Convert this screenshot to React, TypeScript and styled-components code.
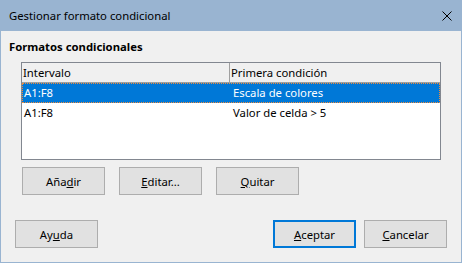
import React from "react";
import styled, { createGlobalStyle, css } from "styled-components";

const GlobalStyle = createGlobalStyle`
  html, body {
    margin: 0;
    padding: 0;
    background: #f0f0f0;
  }
  body {
    font-family: "Noto Sans", "Open Sans", sans-serif;
    font-size: 11.3px;
    color: #000;
  }
`;

const Window = styled.div`
  width: 462px;
  height: 263px;
  box-sizing: border-box;
  background: #99b4d1;
  display: flex;
  flex-direction: column;
`;

const TitleBar = styled.div`
  height: 31px;
  display: flex;
  align-items: center;
  justify-content: space-between;
  padding: 0 10px 0 9px;
  box-sizing: border-box;
`;

const Title = styled.span`
  font-size: 11.3px;
  line-height: 16px;
`;

const CloseIcon = styled.svg`
  width: 10px;
  height: 10px;
  display: block;
`;

const Body = styled.div`
  flex: 1;
  margin: 0 1px 1px;
  background: #f0f0f0;
  display: flex;
  flex-direction: column;
  padding: 8px 0 14px;
  box-sizing: border-box;
`;

const Heading = styled.div`
  font-weight: bold;
  line-height: 16px;
  padding-left: 8px;
`;

const List = styled.div`
  margin: 7px 0 0 20px;
  width: 420px;
  height: 98px;
  box-sizing: border-box;
  border: 1px solid #828790;
  background: #fff;
  display: flex;
  flex-direction: column;
`;

const Header = styled.div`
  display: grid;
  grid-template-columns: 208px 1fr;
  height: 20px;
  box-sizing: border-box;
  border-bottom: 1px solid #a0a0a0;
  background: #f0f0f0;
`;

const HeaderCell = styled.div<{ divider?: boolean }>`
  line-height: 19px;
  padding-left: 1px;
  ${(p) =>
    p.divider &&
    css`
      border-right: 1px solid #a0a0a0;
    `}
`;

const Row = styled.div<{ selected?: boolean }>`
  display: grid;
  grid-template-columns: 209px 1fr;
  height: 20px;
  box-sizing: border-box;
  line-height: 18px;
  border: 1px solid transparent;
  ${(p) =>
    p.selected &&
    css`
      background: #0078d7;
      color: #fff;
      border: 1px dotted #f08c3c;
    `}
`;

const Cell = styled.div`
  padding-left: 1px;
`;

const ButtonRow = styled.div<{ spread?: boolean }>`
  display: flex;
  gap: 14px;
  margin: 7px 0 0 21px;
  ${(p) =>
    p.spread &&
    css`
      margin: auto 14px 0 14px;
      gap: 8px;
    `}
`;

const Spacer = styled.div`
  flex: 1;
`;

const Button = styled.button<{ primary?: boolean }>`
  width: 83px;
  height: 28px;
  box-sizing: border-box;
  border: 1px solid #adadad;
  background: #e1e1e1;
  font-family: inherit;
  font-size: 11.3px;
  color: #000;
  padding: 0;
  ${(p) =>
    p.primary &&
    css`
      border: 2px solid #0078d7;
    `}
`;

const Key = styled.span`
  text-decoration: underline;
`;

export default function App() {
  return (
    <>
      <GlobalStyle />
      <Window>
        <TitleBar>
          <Title>Gestionar formato condicional</Title>
          <CloseIcon viewBox="0 0 10 10">
            <path d="M0.5 0.5 L9.5 9.5 M9.5 0.5 L0.5 9.5" stroke="#000" strokeWidth="1" />
          </CloseIcon>
        </TitleBar>
        <Body>
          <Heading>Formatos condicionales</Heading>
          <List>
            <Header>
              <HeaderCell divider>Intervalo</HeaderCell>
              <HeaderCell>Primera condición</HeaderCell>
            </Header>
            <Row selected>
              <Cell>A1:F8</Cell>
              <Cell>Escala de colores</Cell>
            </Row>
            <Row>
              <Cell>A1:F8</Cell>
              <Cell>Valor de celda &gt; 5</Cell>
            </Row>
          </List>
          <ButtonRow>
            <Button>
              Aña<Key>d</Key>ir
            </Button>
            <Button>
              <Key>E</Key>ditar...
            </Button>
            <Button>
              <Key>Q</Key>uitar
            </Button>
          </ButtonRow>
          <ButtonRow spread>
            <Button>
              Ay<Key>u</Key>da
            </Button>
            <Spacer />
            <Button primary>
              <Key>A</Key>ceptar
            </Button>
            <Button>
              <Key>C</Key>ancelar
            </Button>
          </ButtonRow>
        </Body>
      </Window>
    </>
  );
}
